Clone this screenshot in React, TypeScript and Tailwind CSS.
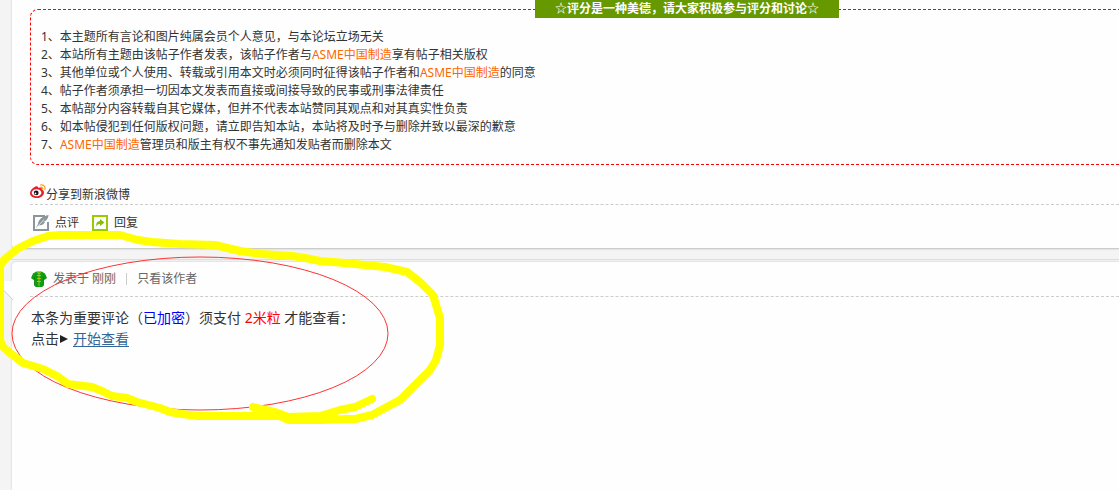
import type { ReactNode } from 'react';

type IChildrenProps = {
  children?: ReactNode;
};

const WeiboIcon = () => (
  <svg className="h-4 w-4 shrink-0" viewBox="0 0 16 16" aria-hidden="true">
    <path
      d="M5.500 2.500c1.800-.8 3 0 2.600 1.500 2-.8 4.200-.5 3.700 1.500 1.500.6 2.200 1.600 2.200 2.900 0 3-3.200 5.600-7.100 5.600S0 12 0 9.200C0 6.600 2.800 3.600 5.500 2.500Z"
      fill="#e6202d"
    />
    <ellipse cx="6.600" cy="8.800" rx="4.800" ry="3.500" fill="#fff" />
    <circle cx="6.200" cy="8.900" r="2.400" fill="#111" />
    <circle cx="5.500" cy="9.400" r="0.900" fill="#fff" />
    <path
      d="M10.500 1c3-.6 5 1.600 4.400 4.600M10.800 3.100c1.500-.2 2.300.7 2 2.200"
      fill="none"
      stroke="#f9a01b"
      strokeWidth="1.200"
      strokeLinecap="round"
    />
  </svg>
);

const CommentIcon = () => (
  <svg className="h-4 w-4 shrink-0" viewBox="0 0 16 16" aria-hidden="true">
    <path d="M12 1H1v14h14V7" fill="none" stroke="#8a959c" strokeWidth="2" />
    <path d="M15.500 0C10 1 5.500 4 5 9l-2 4 3-2.500c4-.5 5.500-2 6-3.500l-2 .2 3-1.700C14.500 4 15.500 2 15.500 0Z" fill="#8a959c" />
    <path d="M4 12 11 4.500" stroke="#fff" strokeWidth="0.700" />
  </svg>
);

const ReplyIcon = () => (
  <svg className="h-4 w-4 shrink-0" viewBox="0 0 16 16" aria-hidden="true">
    <path d="M1 1h14v14H1z" fill="#fff" stroke="#99cc00" strokeWidth="2" />
    <path d="M8 4l4.500 3.500L8 11V9c-2 0-3 .8-3.600 2.600C3.900 8.500 5 6.200 8 6Z" fill="#86c000" />
  </svg>
);

const JacketIcon = () => (
  <svg className="h-4 w-4 shrink-0" viewBox="0 0 16 16" aria-hidden="true">
    <path
      d="M5.500.5h5L14 2.500l2 4.500-2.500 2-1-1V15L11 16H5l-1.500-1V8l-1 1L0 7l2-4.500Z"
      fill="#0f9d12"
    />
    <path d="M3.500 6v8.500M12.500 6v8.500" stroke="#077a07" strokeWidth="0.800" />
    <path d="M8 1v14M6 4.500h4M6 7.500h4M6 10.500h4M6 1.500l2 1 2-1" fill="none" stroke="#b9c41c" strokeWidth="0.900" />
  </svg>
);

const Brand = () => (
  <a href="#" className="text-[#ff6600]">
    ASME中国制造
  </a>
);

const Notice = ({ children }: IChildrenProps) => <li>{children}</li>;

const Scribble = () => (
  <svg
    className="pointer-events-none absolute top-0 left-0 h-[430px] w-[450px]"
    viewBox="0 0 450 430"
    aria-hidden="true"
  >
    <ellipse cx="200" cy="333.500" rx="188" ry="76.500" fill="none" stroke="#f33" />
    <g fill="none" stroke="#ffff00" strokeWidth="8" strokeLinecap="round" strokeLinejoin="round">
      <path d="M0 266 4 260 17 249 33 241 48 236 60 235 120 235 138 240 152 242 180 244 215 245 240 251 262 254 292 256 305 258 320 261 345 263 385 267 407 272 420 282 433 295 436 305 440 318 440 345 436 360 430 370 415 385 400 400 385 408 372 415 355 419 345 419 322 420 288 420 280 416 197 416 182 414 170 412 160 408 137 402 127 398 112 396 102 391 92 387 68 384 57 376 43 369 23 363 10 353 3 347 0 340Z" />
      <path d="M253 407 275 412 288 417 320 416 340 410 355 407 372 399" />
    </g>
  </svg>
);

const App = () => {
  return (
    <div className="relative flex min-h-screen flex-col overflow-hidden bg-[#f4f4f4] font-['Noto_Sans','Noto_Sans_CJK_SC',sans-serif] text-xs text-[#333]">
      <article className="ml-3 rounded-bl border-b border-[#ccc] bg-[#fefefe] pt-[9px] pl-[18px] shadow-[0_0_2px_#bbb]">
        {/* the rules box runs past the right edge of the window */}
        <section className="relative -mr-[225px] rounded-lg border border-dashed border-[#ff0000] pt-[18px] pb-[10px] pl-[10px]">
          <h2 className="absolute -top-[10px] left-1/2 -translate-x-1/2 bg-[#669900] px-5 leading-[18px] font-bold whitespace-nowrap text-white">
            ☆评分是一种美德，请大家积极参与评分和讨论☆
          </h2>
          <ul className="leading-[18px]">
            <Notice>1、本主题所有言论和图片纯属会员个人意见，与本论坛立场无关</Notice>
            <Notice>
              2、本站所有主题由该帖子作者发表，该帖子作者与
              <Brand />
              享有帖子相关版权
            </Notice>
            <Notice>
              3、其他单位或个人使用、转载或引用本文时必须同时征得该帖子作者和
              <Brand />
              的同意
            </Notice>
            <Notice>4、帖子作者须承担一切因本文发表而直接或间接导致的民事或刑事法律责任</Notice>
            <Notice>5、本帖部分内容转载自其它媒体，但并不代表本站赞同其观点和对其真实性负责</Notice>
            <Notice>6、如本帖侵犯到任何版权问题，请立即告知本站，本站将及时予与删除并致以最深的歉意</Notice>
            <Notice>
              7、
              <Brand />
              管理员和版主有权不事先通知发贴者而删除本文
            </Notice>
          </ul>
        </section>
        <div className="border-b border-dashed border-[#ccc] pt-[19px]">
          <a href="#" className="flex h-5 items-start">
            <WeiboIcon />
            <span className="leading-[22px]">分享到新浪微博</span>
          </a>
        </div>
        <div className="flex gap-[13px] pt-2 pb-[15px] pl-[3px]">
          <a href="#" className="flex items-center gap-1.5 leading-5">
            <CommentIcon />
            点评
          </a>
          <a href="#" className="flex items-center gap-1.5 leading-5">
            <ReplyIcon />
            回复
          </a>
        </div>
      </article>

      <div className="mt-[10px] flex flex-1 flex-col border-t border-[#ddd] pt-0.5">
        <article className="relative ml-3 flex-1 rounded-tl bg-[#fefefe] pl-[18px] shadow-[0_0_2px_#bbb]">
          <svg className="absolute top-[19px] -left-3 h-5 w-[13px]" viewBox="0 0 13 20" aria-hidden="true">
            <path d="M0 0h13v19L4 9.500H0Z" fill="#fefefe" />
            <path d="M4 9.500 13 19" fill="none" stroke="#ccc" />
          </svg>
          <header className="flex h-[35px] items-center border-b border-dashed border-[#ccc] pl-px text-[#666]">
            <JacketIcon />
            <span className="pl-1.5">发表于 刚刚</span>
            <span className="mx-[10px] h-3 w-px bg-[#ccc]" />
            <a href="#">只看该作者</a>
          </header>
          <div className="pt-[10px] pl-px text-sm leading-[21px]">
            <p>
              本条为重要评论（<span className="text-[#0000ff]">已加密</span>）须支付{' '}
              <span className="text-[#ff0000]">2米粒</span> 才能查看：
            </p>
            <p className="flex items-center">
              点击
              <svg className="mr-1 h-[10px] w-[10px]" viewBox="0 0 10 10" aria-hidden="true">
                <path d="M1 1v8l8-4Z" fill="#222" />
              </svg>
              <a href="#" className="text-[#336699] underline underline-offset-2">
                开始查看
              </a>
            </p>
          </div>
        </article>
      </div>
      <Scribble />
    </div>
  );
};

export default App;
